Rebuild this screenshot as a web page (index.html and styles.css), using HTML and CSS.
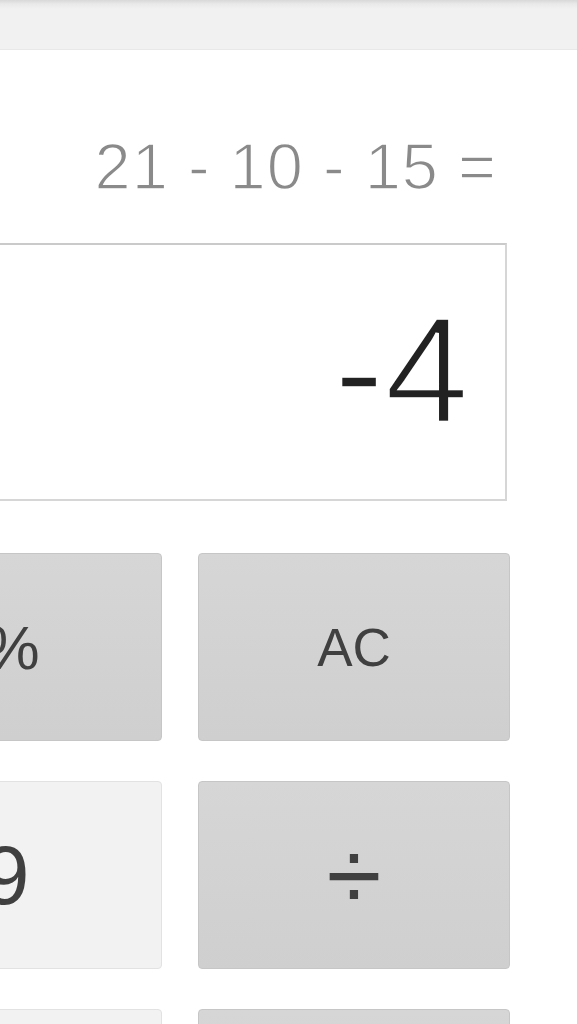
FILE: index.html
```html
<!DOCTYPE html>
<html lang="en">
<head>
<meta charset="utf-8">
<title>Calculator</title>
<link rel="stylesheet" href="styles.css">
</head>
<body>
<header class="topbar"></header>
<main class="calc">
  <div class="expr">21 - 10 - 15 =</div>
  <div class="display"><span class="result">-4</span></div>
  <div class="keys">
    <button class="key op pct">%</button>
    <button class="key op">AC</button>
    <button class="key num">9</button>
    <button class="key op div">÷</button>
    <button class="key num">6</button>
    <button class="key op">×</button>
  </div>
</main>
</body>
</html>
```
FILE: styles.css
```css
html, body {
  margin: 0;
  padding: 0;
  background: #fff;
  overflow: hidden;
  height: 1024px;
}

body {
  font-family: "Liberation Sans", Arial, sans-serif;
}

.topbar {
  height: 49px;
  background: linear-gradient(#d8d8d8 0, #e9e9e9 4px, #f1f1f1 9px, #f1f1f1 100%);
  border-bottom: 1px solid #e8e8e8;
}

.calc {
  width: 660px;
  margin-left: -150px;
  padding-top: 85px;
}

.expr {
  font-size: 65px;
  line-height: 64px;
  color: #8a8a8a;
  text-align: right;
  padding-right: 13px;
  letter-spacing: 1px;
  white-space: pre;
  -webkit-text-stroke: 1.6px #fff;
}

.display {
  box-sizing: border-box;
  height: 258px;
  margin-top: 44px;
  margin-right: 3px;
  border: 2px solid #d6d6d6;
  border-top-color: #cacaca;
  padding: 50px 36px 0 0;
  text-align: right;
}

.result {
  font-size: 152px;
  line-height: 150px;
  color: #222;
  -webkit-text-stroke: 3.5px #fff;
}

.keys {
  display: grid;
  grid-template-columns: 312px 312px;
  column-gap: 36px;
  row-gap: 40px;
  margin-top: 52px;
}

.key {
  height: 188px;
  padding: 0;
  border-radius: 4px;
  border: 1px solid;
  font-family: "Liberation Sans", Arial, sans-serif;
  color: #404040;
}

.op {
  background: linear-gradient(#d6d6d6, #cfcfcf);
  border-color: #c6c6c6;
  font-size: 53px;
}

.pct {
  font-size: 62px;
  padding-left: 12px;
}

.num {
  background: #f2f2f2;
  border-color: #e2e2e2;
  font-size: 84px;
}

.div {
  font-size: 100px;
}
```
